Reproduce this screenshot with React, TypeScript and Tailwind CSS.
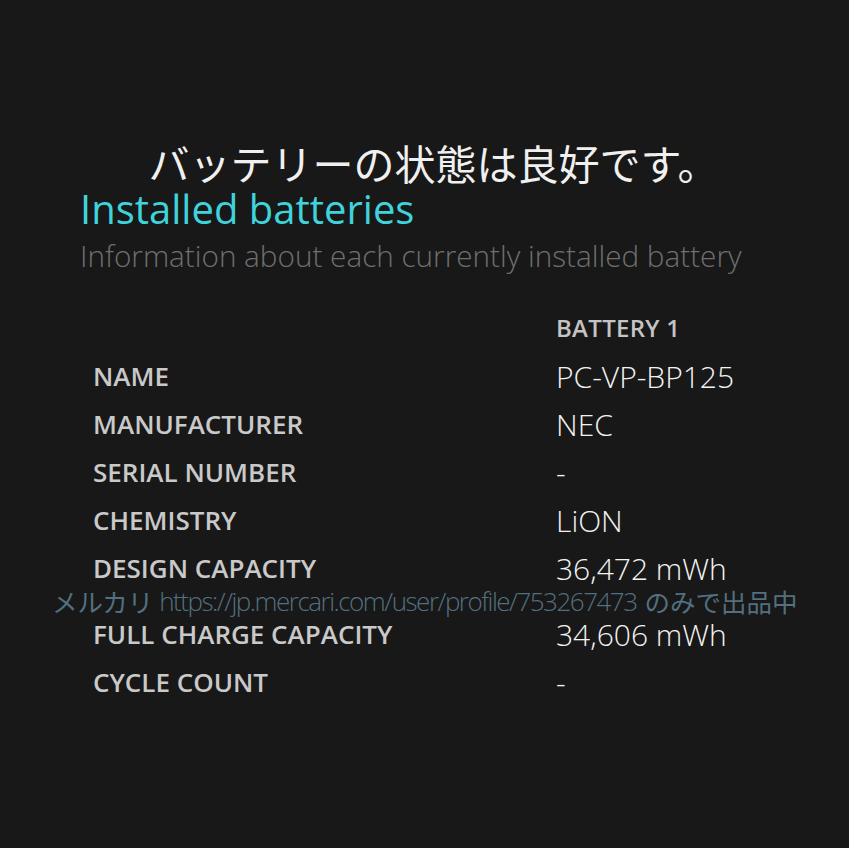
const rows: [string, string][] = [
  ["NAME", "PC-VP-BP125"],
  ["MANUFACTURER", "NEC"],
  ["SERIAL NUMBER", "-"],
  ["CHEMISTRY", "LiON"],
  ["DESIGN CAPACITY", "36,472 mWh"],
];

const rowsAfter: [string, string][] = [
  ["FULL CHARGE CAPACITY", "34,606 mWh"],
  ["CYCLE COUNT", "-"],
];

function Row({ label, value }: { label: string; value: string }) {
  return (
    <div className="flex h-[48px] items-center">
      <div className="w-[476px] pl-[13px] text-[26px] font-semibold text-[#c9c9c9]">
        {label}
      </div>
      <div className="text-[30px] font-light text-[#f2f2f2]">{value}</div>
    </div>
  );
}

export default function App() {
  return (
    <div
      className="min-h-[848px] w-full bg-[#181818] pt-[138px]"
      style={{ fontFamily: '"Open Sans", "Noto Sans CJK JP", sans-serif' }}
    >
      {/* status line */}
      <div className="flex h-[48px] items-center justify-center pl-[18px]">
        <div className="h-[44px] text-[41px] leading-[44px] font-normal text-[#f0f0f0] [font-family:'Noto_Sans_CJK_JP',sans-serif]">
          バッテリーの状態は良好です。
        </div>
      </div>

      <div className="pl-[80px]">
        <h1 className="h-[46px] text-[40px] leading-[46px] font-normal text-[#3fd3dc]">
          Installed batteries
        </h1>
        <p className="h-[48px] text-[29.7px] leading-[48px] font-light text-[#6f6f6f]">
          Information about each currently installed battery
        </p>

        <div className="mt-[24px]">
          <div className="flex h-[48px] items-center">
            <div className="w-[476px]" />
            <div className="text-[24px] font-semibold tracking-[0.3px] text-[#c4c4c4]">BATTERY 1</div>
          </div>
          {rows.map(([l, v]) => (
            <Row key={l} label={l} value={v} />
          ))}
        </div>
      </div>

      {/* watermark */}
      <div className="flex h-[18px] items-center pl-[52px] whitespace-nowrap text-[#52707f]">
        <span className="text-[25.5px] [font-family:'Noto_Sans_CJK_JP',sans-serif]">メルカリ</span>
        <span className="ml-[6px] text-[26px] font-light tracking-[-1.5px]">
          https://jp.mercari.com/user/profile/753267473
        </span>
        <span className="ml-[8px] text-[25.5px] [font-family:'Noto_Sans_CJK_JP',sans-serif]">のみで出品中</span>
      </div>

      <div className="pl-[80px]">
        {rowsAfter.map(([l, v]) => (
          <Row key={l} label={l} value={v} />
        ))}
      </div>
    </div>
  );
}
